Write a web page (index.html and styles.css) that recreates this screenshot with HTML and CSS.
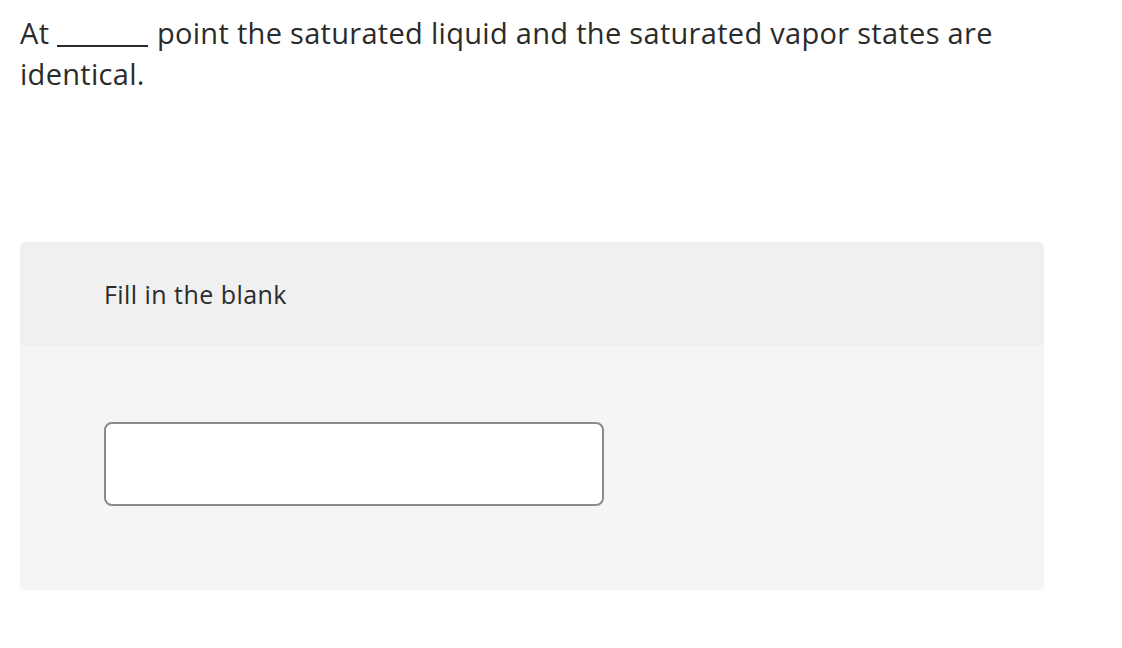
FILE: index.html
```html
<!DOCTYPE html>
<html>
<head>
<meta charset="utf-8">
<link rel="stylesheet" href="styles.css">
</head>
<body>
<div class="page">
  <p class="question">At <span class="blank"></span> point the saturated liquid and the saturated vapor states are identical.</p>
  <div class="card">
    <div class="card-head">Fill in the blank</div>
    <div class="card-body">
      <input class="answer" type="text" aria-label="Blank">
    </div>
  </div>
</div>
</body>
</html>
```

FILE: styles.css
```css
html, body {
  margin: 0;
  padding: 0;
  background: #ffffff;
}
.page {
  padding: 12px 20px 0 20px;
  font-family: "Open Sans", "Liberation Sans", sans-serif;
  color: #2b2b2b;
}
.question {
  margin: 0;
  width: 1024px;
  font-size: 29px;
  line-height: 41px;
  letter-spacing: 0.3px;
}
.blank {
  display: inline-block;
  width: 91px;
  height: 2px;
  background: #2b2b2b;
  vertical-align: -3px;
  margin: 0 1px 0 0;
}
.card {
  margin-top: 148px;
  width: 1024px;
  border-radius: 5px;
  overflow: hidden;
  background: #f5f5f5;
}
.card-head {
  background: #f0f0f0;
  height: 104px;
  box-sizing: border-box;
  padding: 38px 0 0 84px;
  font-size: 25px;
  line-height: 28px;
  letter-spacing: 0.45px;
}
.card-body {
  height: 244px;
  box-sizing: border-box;
  padding: 76px 0 0 84px;
}
.answer {
  display: block;
  width: 500px;
  height: 84px;
  box-sizing: border-box;
  margin: 0;
  border: 2px solid #8a8a8a;
  border-radius: 8px;
  background: #ffffff;
  font-family: inherit;
  font-size: 22px;
  padding: 0 14px;
  outline: none;
}
```
